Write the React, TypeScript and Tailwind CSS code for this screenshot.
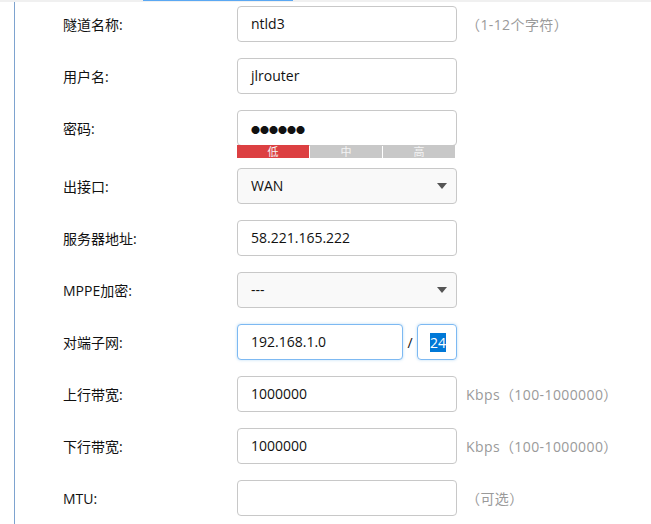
import React from "react";

const latin = "font-['Open_Sans','Noto_Sans_CJK_SC',sans-serif]";

function Box({
  value,
  width = "w-[220px]",
  focused = false,
  select = false,
}: {
  value?: React.ReactNode;
  width?: string;
  focused?: boolean;
  select?: boolean;
}) {
  const border = focused
    ? "border-[#7db9f2] shadow-[0_0_3px_rgba(102,175,233,0.45)]"
    : "border-[#c8c8c8]";
  const bg = select ? "bg-[#f9f9f9]" : "bg-white";
  return (
    <div
      className={`${width} h-[36px] shrink-0 border ${border} ${bg} rounded-[4px] pl-[13px] pr-[9px] flex items-center justify-between text-[14px] text-[#111] ${latin}`}
    >
      <span className="whitespace-nowrap leading-none">{value}</span>
      {select && (
        <svg width="10" height="6" viewBox="0 0 10 6" className="shrink-0">
          <polygon points="0,0 10,0 5,6" fill="#555" />
        </svg>
      )}
    </div>
  );
}

function Hint({ children }: { children: React.ReactNode }) {
  return (
    <div
      className={`ml-[9px] h-[36px] flex items-center text-[14px] tracking-[0.4px] text-[#9a9a9a] whitespace-nowrap ${latin}`}
    >
      {children}
    </div>
  );
}

function Row({
  label,
  children,
  gap = "mb-[16px]",
}: {
  label: string;
  children: React.ReactNode;
  gap?: string;
}) {
  return (
    <div className={`flex items-start h-[36px] ${gap}`}>
      <div className={`w-[174px] h-[36px] shrink-0 flex items-center text-[14px] text-[#111] ${latin}`}>
        {label}
      </div>
      {children}
    </div>
  );
}

function Strength() {
  const seg =
    "flex-1 h-full flex items-center justify-center text-[11px] text-[#f4f4f4] leading-none font-['Noto_Sans_CJK_SC',sans-serif]";
  return (
    <div className="w-[218px] h-[13px] -mt-[1px] flex gap-[1px]">
      <div className={`${seg} bg-[#dc4042]`}>低</div>
      <div className={`${seg} bg-[#c8c8c8]`}>中</div>
      <div className={`${seg} bg-[#c8c8c8]`}>高</div>
    </div>
  );
}

export default function App() {
  return (
    <div className="w-[651px] h-[524px] bg-white overflow-hidden flex flex-col">
      <div className="h-[2px] shrink-0 bg-[#f0f0f0] flex items-start">
        <div className="ml-[143px] w-[150px] h-[1px] bg-[#5ba8f3]" />
      </div>
      <div className="ml-[14px] flex-1 border-l border-[#7ea3cf] pt-[4px] pl-[48px]">
        <Row label="隧道名称:">
          <Box value="ntld3" />
          <Hint>（1-12个字符）</Hint>
        </Row>
        <Row label="用户名:">
          <Box value="jlrouter" />
        </Row>
        <Row label="密码:" gap="mb-[22px]">
          <div className="flex flex-col">
            <Box
              value={
                <span className="text-[9px] font-['Noto_Sans_CJK_SC',sans-serif] text-[#111]">
                  ●●●●●●
                </span>
              }
            />
            <Strength />
          </div>
        </Row>
        <Row label="出接口:">
          <Box value="WAN" select />
        </Row>
        <Row label="服务器地址:">
          <Box value="58.221.165.222" />
        </Row>
        <Row label="MPPE加密:">
          <Box value="---" select />
        </Row>
        <Row label="对端子网:">
          <Box value="192.168.1.0" width="w-[166px]" focused />
          <div className={`w-[14px] h-[36px] flex items-center justify-center text-[14px] text-[#111] ${latin}`}>
            /
          </div>
          <div
            className={`w-[40px] h-[36px] shrink-0 border border-[#7db9f2] shadow-[0_0_3px_rgba(102,175,233,0.45)] rounded-[4px] pl-[12px] flex items-center text-[14px] ${latin}`}
          >
            <span className="bg-[#0078d7] text-white leading-[19px]">24</span>
          </div>
        </Row>
        <Row label="上行带宽:">
          <Box value="1000000" />
          <Hint>Kbps（100-1000000）</Hint>
        </Row>
        <Row label="下行带宽:">
          <Box value="1000000" />
          <Hint>Kbps（100-1000000）</Hint>
        </Row>
        <Row label="MTU:">
          <Box value="" />
          <Hint>（可选）</Hint>
        </Row>
      </div>
    </div>
  );
}
